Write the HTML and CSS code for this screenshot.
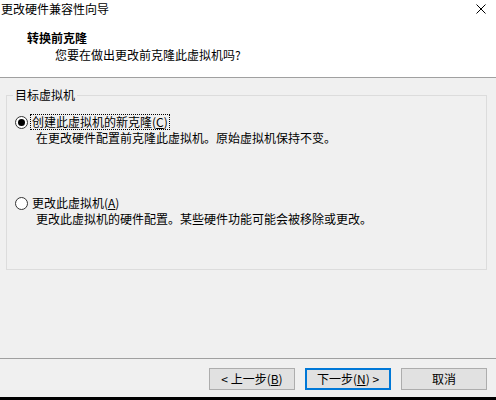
FILE: index.html
```html
<!DOCTYPE html>
<html>
<head>
    <title>更改硬件兼容性向导</title>
    <link rel="stylesheet" href="styles.css">
</head>
<body>
    <div class="wizard">
        <div class="header">
            <div class="titlebar">
                <span class="title">更改硬件兼容性向导</span>
                <svg class="close" width="10" height="10" viewBox="0 0 10 10">
                    <path d="M0.5 0.5 L9.5 9.5 M9.5 0.5 L0.5 9.5" stroke="#000" stroke-width="1" fill="none"/>
                </svg>
            </div>
            <div class="heading">转换前克隆</div>
            <div class="subheading">您要在做出更改前克隆此虚拟机吗?</div>
        </div>

        <div class="content">
            <fieldset class="group">
                <legend>目标虚拟机</legend>

                <div class="option first">
                    <label class="radio-row">
                        <span class="radio checked"></span>
                        <span class="focus">创建此虚拟机的新克隆(<u>C</u>)</span>
                    </label>
                    <div class="desc">在更改硬件配置前克隆此虚拟机。原始虚拟机保持不变。</div>
                </div>

                <div class="option second">
                    <label class="radio-row">
                        <span class="radio"></span>
                        <span class="nofocus">更改此虚拟机(<u>A</u>)</span>
                    </label>
                    <div class="desc">更改此虚拟机的硬件配置。某些硬件功能可能会被移除或更改。</div>
                </div>
            </fieldset>
        </div>

        <div class="footer">
            <button type="button" class="btn">&lt; 上一步(<u>B</u>)</button>
            <button type="button" class="btn default">下一步(<u>N</u>) &gt;</button>
            <button type="button" class="btn">取消</button>
        </div>
    </div>
</body>
</html>
```

FILE: styles.css
```css
body {
    margin: 0;
    font-family: "Noto Sans CJK SC", "Noto Sans", sans-serif;
    font-size: 12px;
    color: #000;
    background-color: #f0f0f0;
}

.wizard {
    width: 496px;
    height: 400px;
    display: flex;
    flex-direction: column;
    background-color: #f0f0f0;
}

.header {
    height: 77px;
    background-color: #ffffff;
    border-bottom: 1px solid #a0a0a0;
}

.titlebar {
    display: flex;
    justify-content: space-between;
    align-items: center;
    height: 18px;
    padding: 0 10px 0 1px;
    line-height: 18px;
}

.close {
    display: block;
}

.heading {
    margin-top: 12px;
    padding-left: 27px;
    font-weight: bold;
    line-height: 16px;
}

.subheading {
    margin-top: 1px;
    padding-left: 55px;
    line-height: 16px;
}

.content {
    flex: 1;
}

.group {
    margin: 10px 9px 0 6px;
    padding: 0 0 42px 0;
    border: 1px solid #dcdcdc;
}

.group legend {
    margin-left: 6px;
    padding: 0 2px;
    line-height: 14px;
}

.option {
    padding-left: 8px;
}

.option.first {
    margin-top: 12px;
}

.option.second {
    margin-top: 49px;
}

.radio-row {
    display: flex;
    align-items: center;
    height: 16px;
    line-height: 14px;
}

.radio {
    width: 11px;
    height: 11px;
    border: 1px solid #333333;
    border-radius: 50%;
    background-color: #ffffff;
    position: relative;
    margin-right: 2px;
}

.radio.checked::after {
    content: "";
    position: absolute;
    left: 2px;
    top: 2px;
    width: 7px;
    height: 7px;
    border-radius: 50%;
    background-color: #000;
}

.focus {
    padding: 0 1px;
    border: 1px dotted #000;
}

.nofocus {
    padding: 0 1px;
    border: 1px solid transparent;
}

.desc {
    padding-left: 21px;
    line-height: 16px;
}

.footer {
    display: flex;
    justify-content: flex-end;
    gap: 10px;
    padding: 9px 9px 7px 0;
    border-top: 1px solid #a0a0a0;
    border-bottom: 3px solid #000;
}

.btn {
    width: 86px;
    height: 22px;
    padding: 0;
    font-family: inherit;
    font-size: 12px;
    line-height: 18px;
    color: #000;
    background-color: #e1e1e1;
    border: 1px solid #adadad;
    border-radius: 0;
}

.btn.default {
    border: 2px solid #0078d7;
}
```
